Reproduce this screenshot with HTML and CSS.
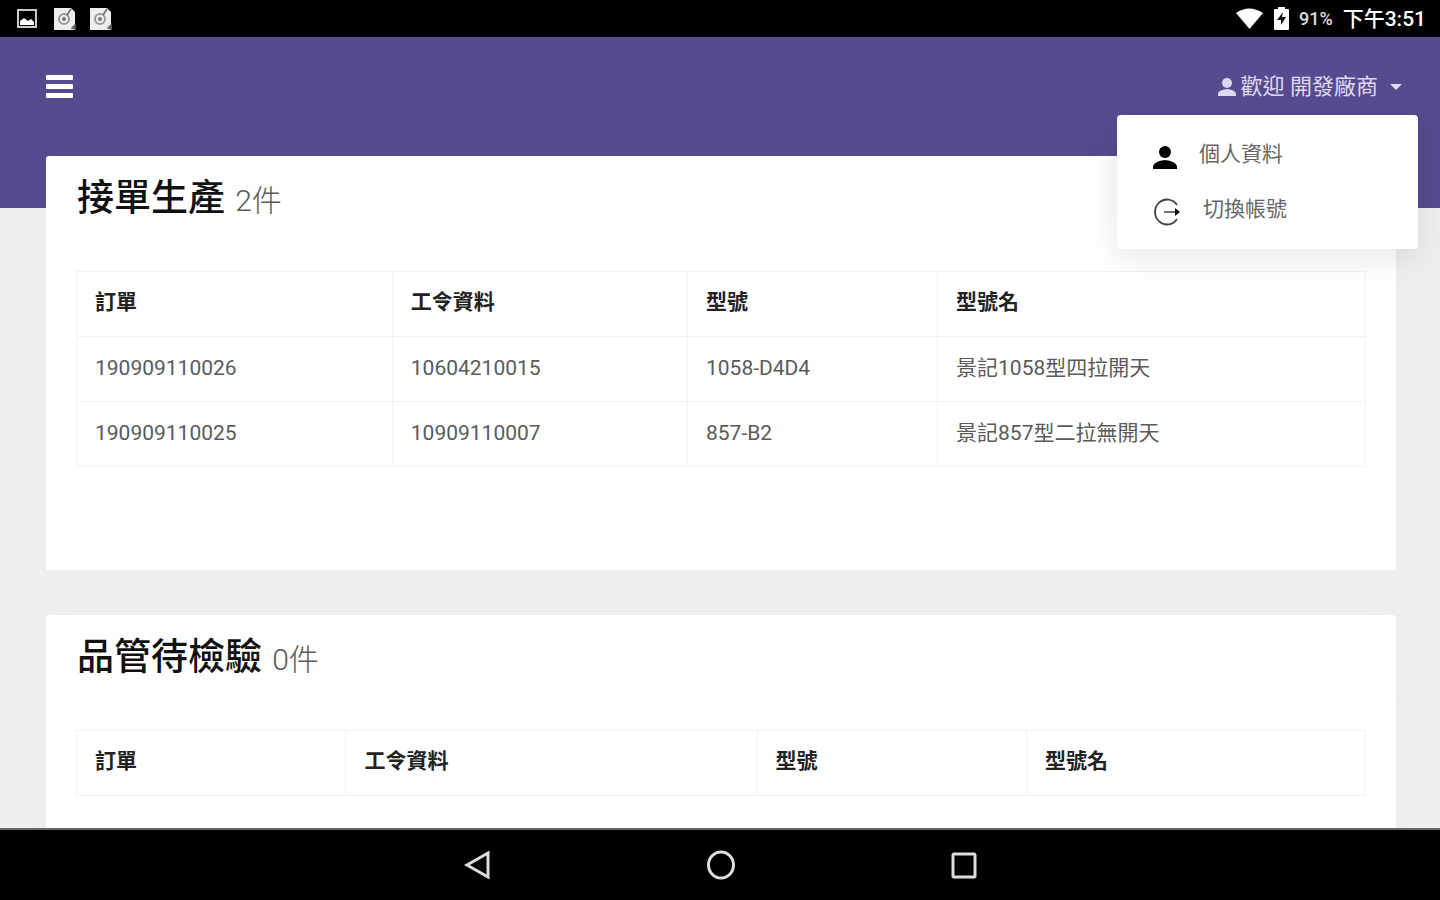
FILE: index.html
```html
<!DOCTYPE html>
<html lang="zh-Hant">
<head>
<meta charset="utf-8">
<meta name="viewport" content="width=device-width, initial-scale=1">
<title>接單生產</title>
<link rel="stylesheet" href="styles.css">
</head>
<body class="screen">
<div class="status-bar">
  <div class="status-group status-notices">
    <svg width="20" height="20" viewBox="0 0 20 20" aria-hidden="true"><rect x="1" y="1" width="18" height="17" fill="none" stroke="#c9c9c9" stroke-width="2"/><path d="M3 16v-4l4-3 4 3 3-2 3 3v3z" fill="#fff"/></svg>
    <svg width="24" height="24" viewBox="0 0 24 24" aria-hidden="true"><path d="M2 1h17l4 4v18H2z" fill="#eee"/><circle cx="12" cy="12" r="5" fill="none" stroke="#999" stroke-width="2"/><circle cx="12" cy="12" r="2" fill="#777"/><path d="M15 8l4-6M20 21l3-3v4z" stroke="#666" stroke-width="1.500" fill="#666"/></svg>
    <svg width="24" height="24" viewBox="0 0 24 24" aria-hidden="true"><path d="M2 1h17l4 4v18H2z" fill="#eee"/><circle cx="12" cy="12" r="5" fill="none" stroke="#999" stroke-width="2"/><circle cx="12" cy="12" r="2" fill="#777"/><path d="M15 8l4-6M20 21l3-3v4z" stroke="#666" stroke-width="1.500" fill="#666"/></svg>
  </div>
  <div class="status-group">
    <svg width="27" height="21" viewBox="0 0 27 21" aria-hidden="true"><path d="M0 5Q13-4 27 5L13.500 21z" fill="#fff"/></svg>
    <svg class="battery" width="17" height="23" viewBox="0 0 17 23" aria-hidden="true"><path d="M5 0h7v2h3q1 0 1 1v19q0 1-1 1H2q-1 0-1-1V3q0-1 1-1h3z" fill="#fff"/><path d="M10 5l-6 8h4v5l5-8H9z" fill="#111"/></svg>
    <span class="status-percent">91%</span>
    <span class="status-time">下午3:51</span>
  </div>
</div>

<main class="page">
  <header class="topbar">
    <button class="menu-button" type="button" aria-label="選單"><span class="menu-line"></span><span class="menu-line"></span><span class="menu-line"></span></button>
    <div class="account">
      <button class="account-button" type="button" aria-expanded="true">
        <svg width="18" height="20" viewBox="0 0 18 20" aria-hidden="true"><circle cx="9" cy="6" r="5" fill="currentColor"/><path d="M0 19v-2q0-4 9-5 9 1 9 5v2z" fill="currentColor"/></svg>
        <span>歡迎 開發廠商</span>
        <span class="caret"></span>
      </button>
      <div class="account-menu">
        <a class="account-link" href="#">
          <svg width="26" height="26" viewBox="0 0 26 26" aria-hidden="true"><circle cx="12" cy="8" r="6" fill="#000"/><path d="M0 25v-3q2-5 12-6 10 1 12 6v3z" fill="#000"/></svg>
          <span>個人資料</span>
        </a>
        <a class="account-link" href="#">
          <svg width="30" height="28" viewBox="0 0 30 28" aria-hidden="true"><path d="M24 7A12 12.500 0 1 0 24 21" fill="none" stroke="#444" stroke-width="1.800"/><path d="M11 14h11" stroke="#444" stroke-width="1.500"/><path d="M22 10l5 4-5 4z" fill="#111"/></svg>
          <span>切換帳號</span>
        </a>
      </div>
    </div>
  </header>

  <section class="card">
    <h2 class="card-title">接單生產 <small class="card-count">2件</small></h2>
    <table class="orders">
      <colgroup><col class="c-order"><col class="c-work"><col class="c-model"><col></colgroup>
      <thead><tr><th>訂單</th><th>工令資料</th><th>型號</th><th>型號名</th></tr></thead>
      <tbody>
        <tr><td>190909110026</td><td>10604210015</td><td>1058-D4D4</td><td>景記1058型四拉開天</td></tr>
        <tr><td>190909110025</td><td>10909110007</td><td>857-B2</td><td>景記857型二拉無開天</td></tr>
      </tbody>
    </table>
  </section>

  <section class="card">
    <h2 class="card-title">品管待檢驗 <small class="card-count">0件</small></h2>
    <table class="orders">
      <colgroup><col class="q-order"><col class="q-work"><col class="q-model"><col></colgroup>
      <thead><tr><th>訂單</th><th>工令資料</th><th>型號</th><th>型號名</th></tr></thead>
    </table>
  </section>
</main>

<nav class="nav-bar" aria-label="系統導覽">
  <button class="nav-button" type="button" aria-label="返回"><svg width="30" height="32" viewBox="0 0 30 32" aria-hidden="true"><path d="M5 16L26 4v24z" fill="none" stroke="#ddd" stroke-width="3"/></svg></button>
  <button class="nav-button" type="button" aria-label="主畫面"><svg width="30" height="32" viewBox="0 0 30 32" aria-hidden="true"><ellipse cx="16" cy="16" rx="12.500" ry="13" fill="none" stroke="#ddd" stroke-width="3"/></svg></button>
  <button class="nav-button" type="button" aria-label="最近"><svg width="30" height="32" viewBox="0 0 30 32" aria-hidden="true"><rect x="5" y="5" width="22" height="23" rx="1" fill="none" stroke="#ddd" stroke-width="3"/></svg></button>
</nav>
</body>
</html>
```

FILE: styles.css
```css
* {
  box-sizing: border-box;
}

.screen {
  margin: 0;
  height: 100vh;
  display: flex;
  flex-direction: column;
  overflow: hidden;
  background: #efefef;
  color: #5a5a5a;
  font-family: Roboto, "Noto Sans CJK TC", sans-serif;
  font-size: 21px;
  line-height: 32px;
}

button {
  padding: 0;
  border: 0;
  background: none;
  color: inherit;
  font: inherit;
  cursor: pointer;
}

svg {
  display: block;
  flex: none;
}

.status-bar {
  flex: none;
  display: flex;
  justify-content: space-between;
  height: 37px;
  padding: 0 14px 0 17px;
  background: #000;
  color: #fff;
}

.status-group {
  display: flex;
  align-items: center;
}

.status-notices {
  gap: 12px;
}

.status-notices svg:first-child {
  margin-right: 3px;
}

.battery {
  margin: 0 9px 0 10px;
}

.status-percent {
  margin-right: 10px;
  color: #ddd;
  font-size: 18px;
  font-weight: 500;
}

.status-time {
  font-size: 21px;
  font-weight: 500;
}

.page {
  flex: 1;
  min-height: 0;
  overflow: hidden;
  padding: 0 44px 0 46px;
  background: linear-gradient(#574b90 171px, #efefef 171px);
}

.topbar {
  display: flex;
  justify-content: space-between;
  align-items: center;
  height: 119px;
  padding-bottom: 20px;
}

.menu-button {
  display: grid;
  gap: 4px;
}

.menu-line {
  width: 27px;
  height: 5px;
  border-radius: 1px;
  background: #fff;
}

.account {
  position: relative;
}

.account-button {
  display: flex;
  align-items: center;
  gap: 5px;
  margin-right: -6px;
  color: #ded9f2;
  font-size: 22px;
}

.caret {
  margin-left: 7px;
  border: 6px solid transparent;
  border-top-color: currentColor;
  border-bottom: 0;
}

.account-menu {
  position: absolute;
  z-index: 2;
  top: 44px;
  right: -22px;
  width: 301px;
  padding: 12px 0;
  border-radius: 4px;
  background: #fff;
  box-shadow: 0 8px 32px rgba(0, 0, 0, 0.1);
}

.account-link {
  display: flex;
  align-items: center;
  gap: 20px;
  height: 55px;
  padding: 0 36px;
  color: #666;
  text-decoration: none;
}

.account-link svg {
  margin-top: 6px;
}

.card {
  margin-bottom: 45px;
  padding: 0 30px 103px;
  border-radius: 3px;
  background: #fff;
  box-shadow: 0 0 30px rgba(0, 0, 0, 0.02);
}

.card-title {
  height: 85px;
  margin: 0 -30px 30px;
  padding: 0 31px;
  border-bottom: 1px solid #fcfcfc;
  color: #111;
  font-size: 37px;
  font-weight: 500;
  line-height: 85px;
}

.card-count {
  margin-left: 1px;
  color: #5a5a5a;
  font-size: 30px;
  font-weight: 300;
}

.orders {
  width: 100%;
  border-collapse: collapse;
  table-layout: fixed;
}

.orders th,
.orders td {
  height: 65px;
  padding: 0 18px 2px;
  border: 1px solid #f2f2f2;
  text-align: left;
}

.orders th {
  padding-bottom: 4px;
  color: #222;
  font-weight: 700;
}

.c-order { width: 24.5%; }
.c-work { width: 22.9%; }
.c-model { width: 19.4%; }
.q-order { width: 20.9%; }
.q-work { width: 31.9%; }
.q-model { width: 20.9%; }

.nav-bar {
  flex: none;
  display: flex;
  justify-content: center;
  align-items: center;
  gap: 213px;
  height: 72px;
  border-top: 2px solid #666;
  background: #000;
}
```
